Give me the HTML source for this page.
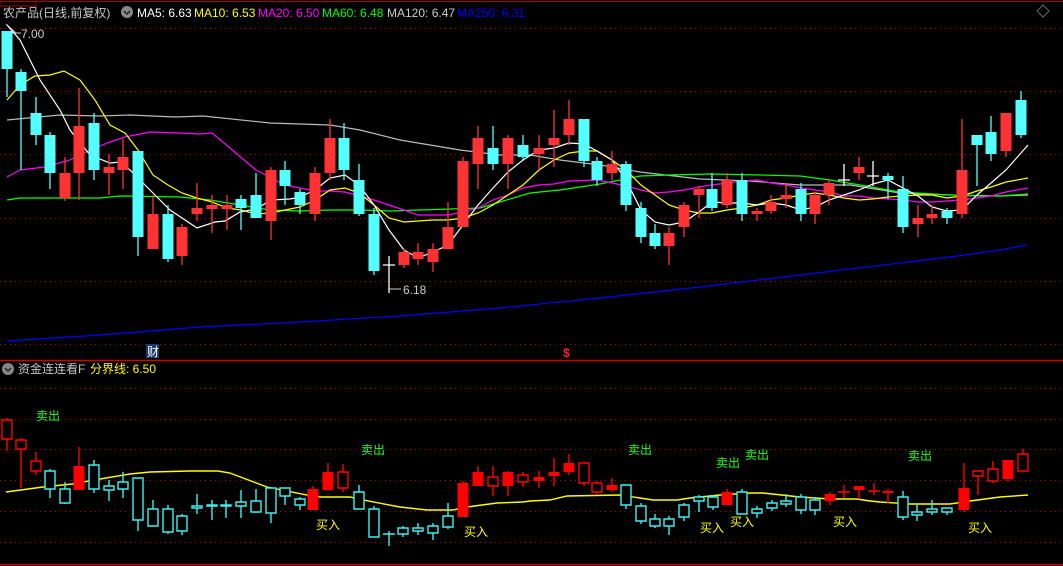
<!DOCTYPE html>
<html><head><meta charset="utf-8"><style>
html,body{margin:0;padding:0;background:#000;overflow:hidden}
svg{display:block}
text{font-family:"Liberation Sans","Noto Sans CJK SC",sans-serif;font-size:12px}
</style></head><body>
<svg width="1063" height="566" viewBox="0 0 1063 566" xmlns="http://www.w3.org/2000/svg">
<rect width="1063" height="566" fill="#000"/>
<path d="M0 1.5H1063" stroke="#a00" stroke-width="1"/>
<path d="M0 0V6H36V0" stroke="#a00" fill="none"/>
<g stroke="#b00" stroke-width="1" stroke-dasharray="1 4">
<path d="M0 28.5H1063M0 91.5H1063M0 154.5H1063M0 218.5H1063M0 281.5H1063M0 344.5H1063"/>
<path d="M0 388.5H1063M0 419.5H1063M0 449.5H1063M0 480.5H1063M0 511.5H1063M0 542.5H1063"/>
</g>
<path d="M0 360.5H1063M0 564.5H1063" stroke="#c00" stroke-width="1.5"/>
<text x="3" y="17" fill="#c8c8c8" font-size="12.5">农产品(日线,前复权)</text>
<circle cx="127" cy="12" r="6" fill="#888"/><path d="M124 11l3 3 3-3" stroke="#222" stroke-width="1.5" fill="none"/>
<text x="137" y="17" fill="#fff">MA5: 6.63</text>
<text x="194" y="17" fill="#ff0">MA10: 6.53</text>
<text x="258" y="17" fill="#f0f">MA20: 6.50</text>
<text x="322" y="17" fill="#0f0">MA60: 6.48</text>
<text x="387" y="17" fill="#ccc">MA120: 6.47</text>
<text x="457" y="17" fill="#00f">MA250: 6.31</text>
<path d="M1043 5l6 6-6 6-6-6z" stroke="#666" fill="none"/>
<path d="M6 24l10 9M7 33h14" stroke="#ccc" fill="none"/>
<text x="21" y="38" fill="#ccc">7.00</text>
<path d="M389 289h12" stroke="#ccc"/>
<text x="403" y="294" fill="#ccc">6.18</text>
<g fill="none" stroke-width="1.2">
<polyline stroke="#00f" points="7,341 100,335 200,327 300,322 400,316 500,308 600,298 700,287 800,275 900,263 950,257 1000,250 1026,245"/>
<polyline stroke="#bbb" points="7,120 60,115 100,116 130,115 175,117 203,116 270,123 330,125 360,130 400,140 460,150 500,155 530,155 560,160 600,165 640,172 700,179 750,181 800,185 850,185 900,193 950,195 1000,196 1028,195"/>
<polyline stroke="#0f0" points="7,200 20,198 60,198 100,198 120,196 180,197 210,200 240,205 270,210 300,211 330,210 360,210 390,211 420,210 450,209 480,208 500,202 530,193 560,190 600,184 640,176 670,175 710,174 760,175 800,176 830,180 860,185 900,192 950,195 980,196 1000,196 1028,194"/>
<polyline stroke="#f0f" points="7,177 20,170 45,167 70,160 90,150 110,142 125,137 150,132 180,133 200,134 212,133 230,148 256,170 285,185 315,191 330,191 345,192 359,196 374,200 389,205 404,210 418,215 433,215 448,215 463,212 478,208 493,200 508,195 523,188 539,185 554,184 569,181 597,180 612,183 626,186 641,190 655,193 669,192 684,190 699,187 712,185 727,183 742,181 757,180 771,183 786,185 801,188 815,190 829,192 844,196 859,196 873,198 888,199 903,200 918,202 932,202 947,201 962,200 977,198 991,196 1006,192 1028,188"/>
<polyline stroke="#ff0" points="7,100 20,85 35,76 50,75 64,71 80,80 95,100 110,125 125,133 138,150 153,175 168,185 182,193 197,198 212,202 227,208 241,210 256,214 271,213 285,210 300,207 315,200 330,190 345,188 359,193 374,205 389,218 404,222 418,221 433,220 448,220 463,218 478,213 493,205 508,195 523,185 539,170 554,160 569,153 584,151 597,151 612,160 626,170 641,185 655,195 669,205 684,210 699,213 712,213 727,210 742,208 757,205 771,200 786,198 801,195 815,193 829,195 844,198 859,200 873,199 888,197 903,196 918,195 932,195 947,198 962,196 977,191 991,187 1006,182 1028,178"/>
<polyline stroke="#fff" points="7,25 20,40 40,80 60,110 70,130 90,155 110,163 120,162 130,170 150,190 170,210 197,228 215,222 225,221 240,212 256,209 271,200 290,199 300,197 315,190 330,178 345,175 359,185 374,205 389,230 404,250 418,258 433,252 448,245 463,225 478,205 493,188 508,172 523,160 539,150 554,148 569,143 584,144 597,151 612,160 626,180 641,210 655,222 669,225 684,222 699,212 712,202 727,203 742,203 757,205 771,203 786,205 801,210 815,207 829,200 844,195 859,190 873,184 888,180 903,188 918,196 932,207 947,211 962,210 977,195 991,183 1006,170 1028,145"/>
</g>
<path stroke="#54ffff" stroke-width="1.3" d="M7 31V97M21 69V170M36 97V145M50 132V189M94 113V180M138 151V256M168 205V262M241 195V230M256 173V218M285 161V205M300 189V214M344 123V180M359 164V216M374 208V275M493 126V170M523 135V161M584 119V167M597 157V186M626 161V211M641 202V243M655 224V249M712 173V211M742 173V221M801 183V221M888 173V199M903 176V233M947 208V224M977 135V186M991 116V161M1021 91V138"/>
<path fill="#54ffff" d="M1.5 31h11V69h-11zM15.5 72h11V91h-11zM30.5 113h11V135h-11zM44.5 135h11V173h-11zM88.5 123h11V170h-11zM132.5 151h11V237h-11zM162.5 214h11V259h-11zM235.5 199h11V208h-11zM250.5 195h11V218h-11zM279.5 170h11V186h-11zM294.5 192h11V205h-11zM338.5 138h11V170h-11zM353.5 180h11V214h-11zM368.5 214h11V271h-11zM487.5 148h11V164h-11zM517.5 145h11V157h-11zM578.5 119h11V161h-11zM591.5 161h11V180h-11zM620.5 164h11V205h-11zM635.5 208h11V237h-11zM649.5 233h11V246h-11zM706.5 189h11V208h-11zM736.5 180h11V214h-11zM795.5 189h11V214h-11zM882.5 176h11V180h-11zM897.5 189h11V227h-11zM941.5 211h11V218h-11zM971.5 135h11V145h-11zM985.5 132h11V154h-11zM1015.5 100h11V135h-11z"/>
<path stroke="#ff3333" stroke-width="1.3" d="M65 157V201M79 88V200M109 154V195M123 139V189M153 195V249M182 224V265M197 183V221M212 195V233M227 195V230M271 167V240M315 167V221M330 119V180M404 249V268M418 243V265M433 243V272M448 202V249M463 157V227M478 126V189M508 135V189M539 135V170M554 110V167M569 100V145M612 151V180M669 227V265M684 202V237M699 186V218M727 173V208M757 208V221M771 195V214M786 183V208M815 192V224M829 180V205M859 157V180M918 205V237M932 205V224M962 119V218M1006 113V157"/>
<path fill="#ff3333" d="M59.5 173h11V198h-11zM73.5 126h11V173h-11zM103.5 167h11V173h-11zM117.5 157h11V170h-11zM147.5 214h11V249h-11zM176.5 227h11V256h-11zM191.5 208h11V214h-11zM206.5 205h11V209h-11zM221.5 205h11V209h-11zM265.5 170h11V221h-11zM309.5 173h11V214h-11zM324.5 138h11V173h-11zM398.5 252h11V265h-11zM412.5 252h11V259h-11zM427.5 249h11V262h-11zM442.5 227h11V249h-11zM457.5 161h11V227h-11zM472.5 138h11V164h-11zM502.5 138h11V164h-11zM533.5 148h11V154h-11zM548.5 138h11V145h-11zM563.5 119h11V135h-11zM606.5 164h11V173h-11zM663.5 233h11V246h-11zM678.5 205h11V227h-11zM693.5 189h11V195h-11zM721.5 180h11V205h-11zM751.5 211h11V214h-11zM765.5 202h11V211h-11zM780.5 195h11V199h-11zM809.5 195h11V214h-11zM823.5 183h11V195h-11zM853.5 167h11V173h-11zM912.5 218h11V224h-11zM926.5 214h11V218h-11zM956.5 170h11V214h-11zM1000.5 113h11V151h-11z"/>
<path stroke="#fff" stroke-width="1.3" d="M389 256V293M383 265h12M844 164V186M838 180h12M873 161V186M867 176h12"/>
<rect x="146" y="344" width="13" height="14" fill="#1a3a6a"/>
<text x="147" y="356" fill="#fff">财</text>
<text x="563" y="357" fill="#f22" font-weight="bold">$</text>
<circle cx="8" cy="369" r="6" fill="#888"/><path d="M5 368l3 3 3-3" stroke="#222" stroke-width="1.5" fill="none"/>
<text x="18" y="373" fill="#c8c8c8" font-size="11.5">资金连连看F</text>
<text x="90" y="373" fill="#ff0" font-size="11.5">分界线: 6.50</text>
<polyline fill="none" stroke="#ff0" stroke-width="1.4" points="6,492 43,487 72,484 100,479 130,474 150,472 190,471 218,471 230,473 267,487 307,495 320,497 350,497 363,500 400,507 427,510 453,510 467,507 497,503 523,502 530,501 550,500 567,496 620,495 640,498 653,500 677,500 690,498 720,495 750,493 763,493 800,497 830,499 857,499 870,501 880,502 910,504 950,504 970,501 1000,497 1028,495"/>
<path stroke="#3ef0f0" stroke-width="1.4" d="M50 469V498M65 482V504M94 460V493M109 480V501M123 472V498M138 478V531M153 500V526M168 505V534M182 514V535M197 494V514M212 500V520M226 500V518M241 490V518M256 489V513M271 487V523M285 488V505M300 497V510M359 485V509M374 506V537M389 531V546M383 534h12M403 526V537M418 523V535M433 523V540M448 503V529M626 485V509M641 503V524M655 514V528M669 516V535M684 503V521M699 495V512M713 495V510M742 489V514M757 506V518M772 500V511M786 494V507M801 494V514M815 497V515M903 491V520M917 505V521M932 500V515M947 508V515"/>
<g fill="#000" stroke="#3ef0f0" stroke-width="1.4">
<path d="M45 471h10V489h-10zM60 489h10V503h-10zM89 465h10V489h-10zM104 486h10V490h-10zM118 482h10V489h-10zM133 478h10V520h-10zM148 509h10V526h-10zM163 509h10V532h-10zM177 516h10V531h-10zM192 506h10V508h-10zM207 505h10V506h-10zM221 505h10V506h-10zM236 502h10V506h-10zM251 501h10V512h-10zM266 488h10V513h-10zM280 488h10V496h-10zM295 499h10V505h-10zM354 492h10V509h-10zM369 509h10V537h-10zM398 528h10V534h-10zM413 528h10V531h-10zM428 526h10V533h-10zM443 516h10V527h-10zM621 485h10V505h-10zM636 506h10V521h-10zM650 519h10V526h-10zM664 519h10V526h-10zM679 505h10V517h-10zM694 497h10V501h-10zM708 497h10V507h-10zM737 492h10V514h-10zM752 509h10V513h-10zM767 503h10V508h-10zM781 501h10V504h-10zM796 497h10V510h-10zM810 500h10V510h-10zM898 497h10V517h-10zM912 512h10V515h-10zM927 509h10V512h-10zM942 508h10V512h-10z"/>
</g>
<path stroke="#f00" stroke-width="1.4" d="M7 418V451M21 438V488M36 452V475M343 464V492M493 466V496M523 472V487M584 463V486M597 481V495M978 471V495M993 461V483M1023 449V471M79 447V490M313 486V510M328 463V491M463 481V517M478 466V486M508 471V496M539 471V488M554 458V486M569 454V475M612 478V492M727 489V505M830 492V505M859 486V499M888 489V503M964 463V512M1008 460V482M844 485V498M838 492h12M874 483V495M868 491h12"/>
<g fill="#000" stroke="#f00" stroke-width="1.4">
<path d="M2 420h10V439h-10zM16 440h10V449h-10zM31 461h10V471h-10zM338 472h10V488h-10zM488 477h10V486h-10zM518 475h10V482h-10zM579 463h10V483h-10zM592 483h10V492h-10zM973 471h10V476h-10zM988 469h10V481h-10zM1018 454h10V471h-10z"/>
</g>
<path fill="#f00" d="M73.5 466h11V490h-11zM307.5 489h11V510h-11zM322.5 472h11V490h-11zM457.5 483h11V517h-11zM472.5 472h11V486h-11zM502.5 472h11V486h-11zM533.5 477h11V481h-11zM548.5 472h11V476h-11zM563.5 463h11V472h-11zM606.5 485h11V490h-11zM721.5 492h11V505h-11zM824.5 494h11V501h-11zM853.5 486h11V490h-11zM882.5 491h11V493h-11zM958.5 488h11V510h-11zM1002.5 460h11V479h-11z"/>
<g fill="#2f2">
<text x="36" y="420">卖出</text><text x="361" y="454">卖出</text><text x="628" y="454">卖出</text>
<text x="716" y="467">卖出</text><text x="745" y="459">卖出</text><text x="908" y="460">卖出</text>
</g>
<g fill="#ff0">
<text x="316" y="529">买入</text><text x="464" y="536">买入</text><text x="700" y="532">买入</text>
<text x="730" y="526">买入</text><text x="833" y="526">买入</text><text x="968" y="532">买入</text>
</g>
</svg>
</body></html>
